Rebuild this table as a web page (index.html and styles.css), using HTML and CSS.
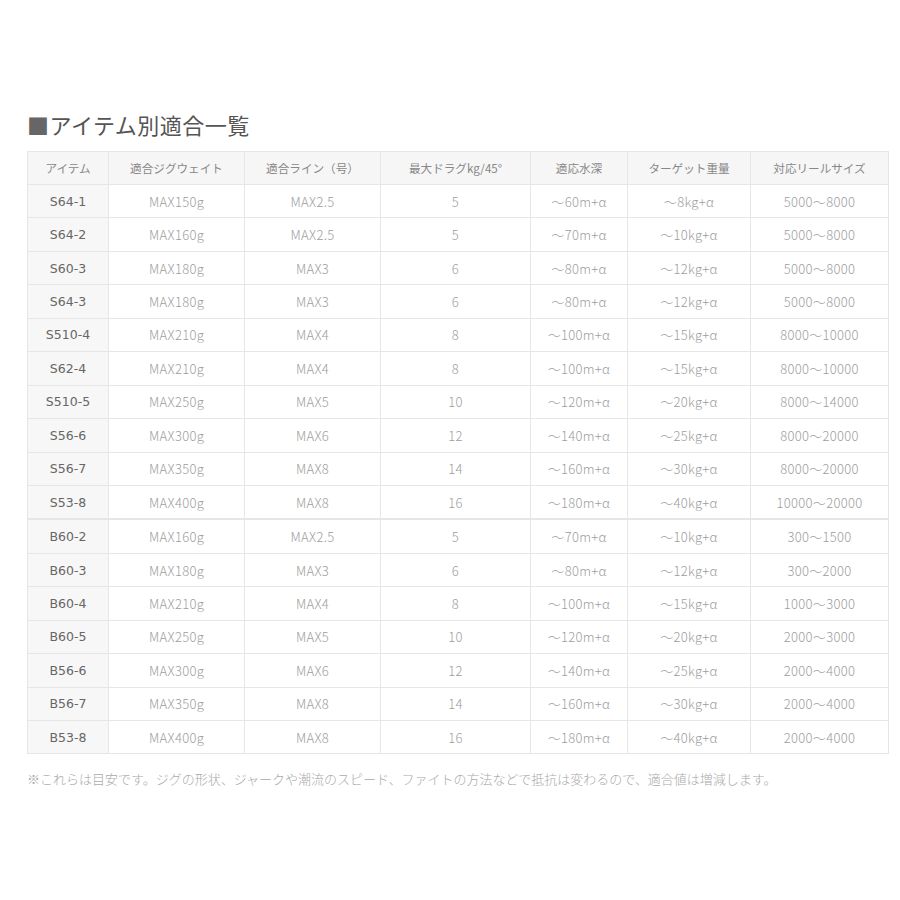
FILE: index.html
```html
<!DOCTYPE html>
<html lang="ja">
<head>
<meta charset="utf-8">
<link rel="stylesheet" href="styles.css">
</head>
<body>
<div class="page">
  <h2 class="title"><span class="sq">■</span>アイテム別適合一覧</h2>
  <table class="spec">
    <colgroup>
      <col class="c1"><col class="c2"><col class="c3"><col class="c4"><col class="c5"><col class="c6"><col class="c7">
    </colgroup>
    <thead>
      <tr><th>アイテム</th><th>適合ジグウェイト</th><th>適合ライン（号）</th><th>最大ドラグkg/45°</th><th>適応水深</th><th>ターゲット重量</th><th>対応リールサイズ</th></tr>
    </thead>
    <tbody>
      <tr><td>S64-1</td><td>MAX150g</td><td>MAX2.5</td><td>5</td><td>～60m+α</td><td>～8kg+α</td><td>5000～8000</td></tr>
      <tr><td>S64-2</td><td>MAX160g</td><td>MAX2.5</td><td>5</td><td>～70m+α</td><td>～10kg+α</td><td>5000～8000</td></tr>
      <tr><td>S60-3</td><td>MAX180g</td><td>MAX3</td><td>6</td><td>～80m+α</td><td>～12kg+α</td><td>5000～8000</td></tr>
      <tr><td>S64-3</td><td>MAX180g</td><td>MAX3</td><td>6</td><td>～80m+α</td><td>～12kg+α</td><td>5000～8000</td></tr>
      <tr><td>S510-4</td><td>MAX210g</td><td>MAX4</td><td>8</td><td>～100m+α</td><td>～15kg+α</td><td>8000～10000</td></tr>
      <tr><td>S62-4</td><td>MAX210g</td><td>MAX4</td><td>8</td><td>～100m+α</td><td>～15kg+α</td><td>8000～10000</td></tr>
      <tr><td>S510-5</td><td>MAX250g</td><td>MAX5</td><td>10</td><td>～120m+α</td><td>～20kg+α</td><td>8000～14000</td></tr>
      <tr><td>S56-6</td><td>MAX300g</td><td>MAX6</td><td>12</td><td>～140m+α</td><td>～25kg+α</td><td>8000～20000</td></tr>
      <tr><td>S56-7</td><td>MAX350g</td><td>MAX8</td><td>14</td><td>～160m+α</td><td>～30kg+α</td><td>8000～20000</td></tr>
      <tr class="last"><td>S53-8</td><td>MAX400g</td><td>MAX8</td><td>16</td><td>～180m+α</td><td>～40kg+α</td><td>10000～20000</td></tr>
      <tr><td>B60-2</td><td>MAX160g</td><td>MAX2.5</td><td>5</td><td>～70m+α</td><td>～10kg+α</td><td>300～1500</td></tr>
      <tr><td>B60-3</td><td>MAX180g</td><td>MAX3</td><td>6</td><td>～80m+α</td><td>～12kg+α</td><td>300～2000</td></tr>
      <tr><td>B60-4</td><td>MAX210g</td><td>MAX4</td><td>8</td><td>～100m+α</td><td>～15kg+α</td><td>1000～3000</td></tr>
      <tr><td>B60-5</td><td>MAX250g</td><td>MAX5</td><td>10</td><td>～120m+α</td><td>～20kg+α</td><td>2000～3000</td></tr>
      <tr><td>B56-6</td><td>MAX300g</td><td>MAX6</td><td>12</td><td>～140m+α</td><td>～25kg+α</td><td>2000～4000</td></tr>
      <tr><td>B56-7</td><td>MAX350g</td><td>MAX8</td><td>14</td><td>～160m+α</td><td>～30kg+α</td><td>2000～4000</td></tr>
      <tr><td>B53-8</td><td>MAX400g</td><td>MAX8</td><td>16</td><td>～180m+α</td><td>～40kg+α</td><td>2000～4000</td></tr>
    </tbody>
  </table>
  <p class="note">※これらは目安です。ジグの形状、ジャークや潮流のスピード、ファイトの方法などで抵抗は変わるので、適合値は増減します。</p>
</div>
</body>
</html>
```
FILE: styles.css
```css
html, body {
  margin: 0;
  padding: 0;
  background: #fff;
}
body {
  font-family: "Noto Sans CJK JP", "Noto Sans", sans-serif;
}
.page {
  padding: 109px 12px 0 27px;
}
.title {
  margin: 0 0 12px 0;
  font-size: 22px;
  line-height: 30px;
  font-weight: 400;
  color: #555;
  letter-spacing: 0.5px;
}
.title .sq {
  color: #666;
}
.spec {
  border-collapse: collapse;
  width: 861px;
  table-layout: fixed;
  font-size: 13px;
}
.c1 { width: 81px; }
.c2 { width: 136px; }
.c3 { width: 136px; }
.c4 { width: 150px; }
.c5 { width: 97px; }
.c6 { width: 123px; }
.c7 { width: 138px; }
.spec th, .spec td {
  border: 1px solid #e6e6e6;
  text-align: center;
  padding: 0;
}
.spec th {
  height: 32px;
  background: #f6f6f6;
  color: #888;
  font-weight: 400;
  font-size: 11.6px;
}
.spec td {
  height: 32.45px;
  color: #9d9d9d;
  font-weight: 300;
  letter-spacing: 0.3px;
}
.spec td:first-child {
  background: #f7f7f7;
  color: #666;
  font-family: "DejaVu Sans", "Noto Sans", sans-serif;
  font-size: 12.5px;
  font-weight: 400;
  letter-spacing: 0;
}
.spec tr.last td {
  border-bottom: 2px solid #e6e6e6;
}
.note {
  margin: 15px 0 0 0;
  font-size: 13px;
  color: #aaa;
  font-weight: 300;
}
```
